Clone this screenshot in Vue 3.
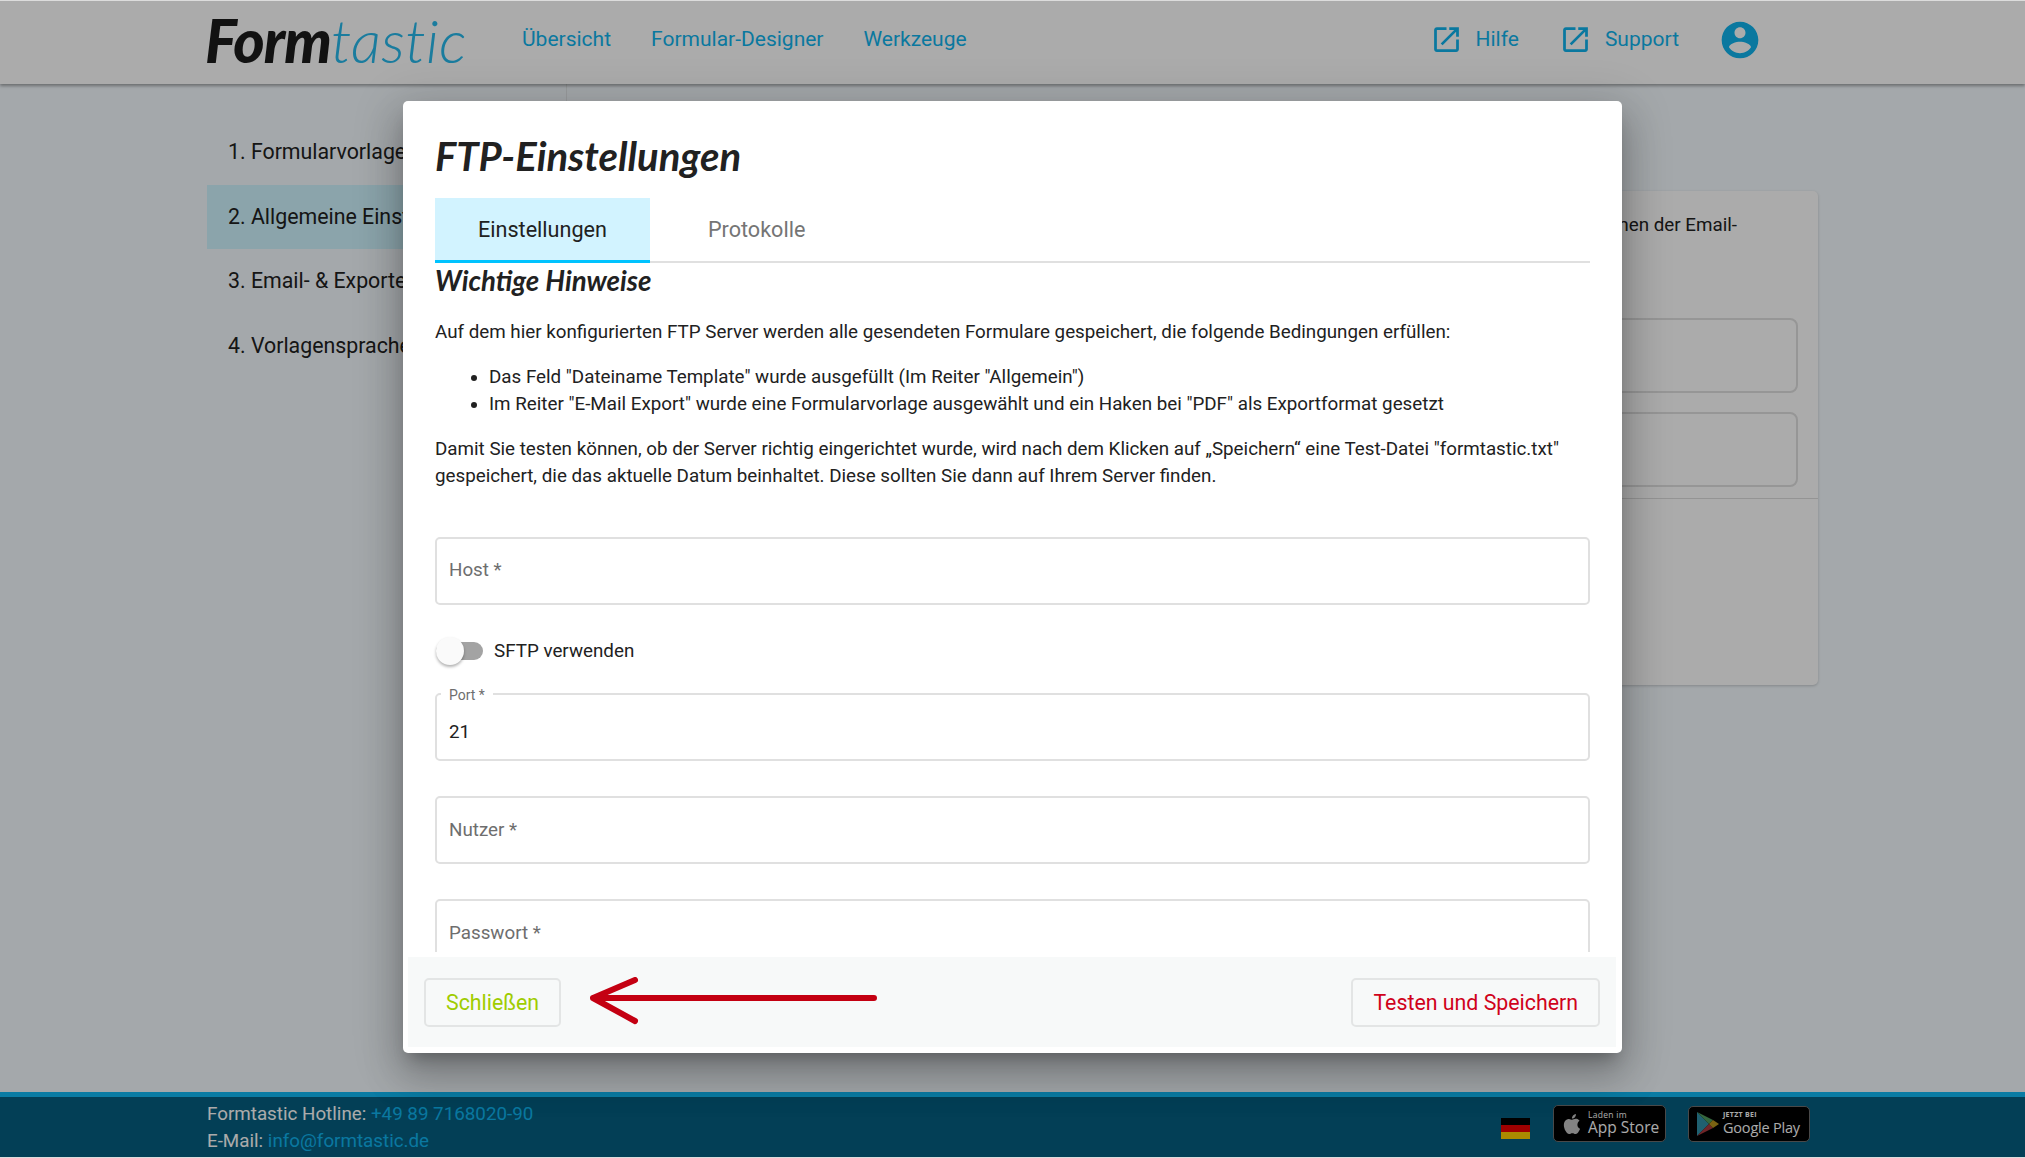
<template>
  <div class="page">
    <header class="topbar">
      <a class="logo"><b>Form</b><span>tastic</span></a>
      <nav class="nav">
        <a v-for="n in navItems" :key="n">{{ n }}</a>
      </nav>
      <div class="top-right">
        <a v-for="l in helpLinks" :key="l" class="ext">
          <svg viewBox="0 0 24 24" width="33" height="33"><path :d="openIcon" /></svg>
          {{ l }}
        </a>
        <svg class="account" viewBox="0 0 24 24" width="44" height="44"><path :d="accountIcon" /></svg>
      </div>
    </header>

    <main class="main">
      <aside class="sidebar">
        <div
          v-for="(s, i) in steps"
          :key="s"
          class="step"
          :class="{ active: i === 1 }"
        >{{ s }}</div>
      </aside>
      <section class="content">
        <div class="card">
          <div class="card-top">
            <p class="card-text">Hier können Sie den Betreff und den Absendernamen der Email-</p>
            <div class="card-box"></div>
            <div class="card-box"></div>
          </div>
          <div class="card-bottom"></div>
        </div>
      </section>
    </main>

    <footer class="footer">
      <div class="contact">
        <div>Formtastic Hotline: <a>+49 89 7168020-90</a></div>
        <div>E-Mail: <a>info@formtastic.de</a></div>
      </div>
      <div class="stores">
        <div class="flag"><i></i><i></i><i></i></div>
        <div class="badge apple">
          <svg viewBox="0 0 24 24" width="24" height="24"><path fill="#c4c4c4" :d="appleIcon" /></svg>
          <div class="badge-text">
            <small>Laden im</small>
            <span>App Store</span>
          </div>
        </div>
        <div class="badge play">
          <svg viewBox="0 0 22 24" width="22" height="24">
            <polygon points="0,0 12,12 0,24" fill="#2f8fa8" />
            <polygon points="0,0 16,8 12,12" fill="#4f9a5c" />
            <polygon points="0,24 16,16 12,12" fill="#a8383c" />
            <polygon points="16,8 22,12 16,16 12,12" fill="#b8921c" />
          </svg>
          <div class="badge-text">
            <small class="caps">JETZT BEI</small>
            <span>Google Play</span>
          </div>
        </div>
      </div>
    </footer>

    <div class="overlay">
      <div class="dialog">
        <h2 class="dialog-title">FTP-Einstellungen</h2>
        <div class="tabs">
          <div class="tab active">Einstellungen</div>
          <div class="tab">Protokolle</div>
        </div>
        <div class="dialog-body">
          <h3 class="hint-title">Wichtige Hinweise</h3>
          <p>Auf dem hier konfigurierten FTP Server werden alle gesendeten Formulare gespeichert, die folgende Bedingungen erfüllen:</p>
          <ul>
            <li>Das Feld "Dateiname Template" wurde ausgefüllt (Im Reiter "Allgemein")</li>
            <li>Im Reiter "E-Mail Export" wurde eine Formularvorlage ausgewählt und ein Haken bei "PDF" als Exportformat gesetzt</li>
          </ul>
          <p>Damit Sie testen können, ob der Server richtig eingerichtet wurde, wird nach dem Klicken auf „Speichern“ eine Test-Datei "formtastic.txt" gespeichert, die das aktuelle Datum beinhaltet. Diese sollten Sie dann auf Ihrem Server finden.</p>

          <div class="field host"><span class="placeholder">Host *</span></div>
          <div class="toggle-row">
            <span class="toggle"><span class="thumb"></span></span>
            <span>SFTP verwenden</span>
          </div>
          <div class="field port">
            <label class="float-label">Port *</label>
            <span class="value">21</span>
          </div>
          <div class="field user"><span class="placeholder">Nutzer *</span></div>
          <div class="field password"><span class="placeholder">Passwort *</span></div>
        </div>
        <div class="actions">
          <button class="btn close">Schließen</button>
          <button class="btn save">Testen und Speichern</button>
          <svg class="arrow" viewBox="0 0 290 48" width="290" height="48" fill="none">
            <path d="M3 21 H284 M45 3 L3 21 L45 44" />
          </svg>
        </div>
      </div>
    </div>
  </div>
</template>

<script setup>
const navItems = ['Übersicht', 'Formular-Designer', 'Werkzeuge']
const helpLinks = ['Hilfe', 'Support']
const steps = [
  '1. Formularvorlage',
  '2. Allgemeine Einstellungen',
  '3. Email- & Exporteinstellungen',
  '4. Vorlagensprache',
]

const openIcon = 'M19 19H5V5h7V3H5c-1.11 0-2 .9-2 2v14c0 1.1.89 2 2 2h14c1.1 0 2-.9 2-2v-7h-2v7zM14 3v2h3.59l-9.83 9.83 1.41 1.41L19 6.41V10h2V3h-7z'
const accountIcon = 'M12 2C6.48 2 2 6.48 2 12s4.48 10 10 10 10-4.48 10-10S17.52 2 12 2zm0 3c1.66 0 3 1.34 3 3s-1.34 3-3 3-3-1.34-3-3 1.34-3 3-3zm0 14.2c-2.5 0-4.71-1.28-6-3.22.03-1.99 4-3.08 6-3.08 1.99 0 5.97 1.09 6 3.08-1.29 1.94-3.5 3.22-6 3.22z'
const appleIcon = 'M18.71 19.5c-.83 1.24-1.71 2.45-3.05 2.47-1.34.03-1.77-.79-3.29-.79-1.53 0-2 .77-3.27.82-1.31.05-2.3-1.32-3.14-2.53C4.25 17 2.94 12.45 4.7 9.39c.87-1.52 2.43-2.48 4.12-2.51 1.28-.02 2.5.87 3.29.87.78 0 2.26-1.07 3.8-.91.65.03 2.47.26 3.64 1.98-.09.06-2.17 1.28-2.15 3.81.03 3.02 2.65 4.03 2.68 4.04-.03.07-.42 1.44-1.38 2.83M13 3.5c.73-.83 1.94-1.46 2.94-1.5.13 1.17-.34 2.35-1.04 3.19-.69.85-1.83 1.51-2.95 1.42-.15-1.15.41-2.35 1.05-3.11z'
</script>

<style>
html, body { background: #dcdcdc; overflow: hidden; }
</style>

<style scoped>
.page {
  position: relative;
  height: 1156px;
  margin-top: 1px;
  display: flex;
  flex-direction: column;
  background: #f5fbff;
  font-family: Roboto, sans-serif;
  font-size: 18.8px;
  line-height: 27px;
  color: #212121;
  overflow: hidden;
}

/* ====== Header ====== */
.topbar {
  height: 83px;
  flex: none;
  display: flex;
  align-items: center;
  padding: 0 263px 6px 205px;
  box-sizing: border-box;
  background: #fff;
  box-shadow: 0 2px 3px rgba(0,0,0,.35);
  z-index: 1;
  font-size: 21px;
}
.logo {
  width: 317px;
  font-family: Lato, sans-serif;
  font-size: 60px;
  font-style: italic;
  line-height: 60px;
  letter-spacing: -1px;
  color: #1c1c1c;
}
.logo b { font-weight: 900; }
.logo span { font-weight: 300; color: #27b9ec; letter-spacing: .3px; }
.nav { display: flex; gap: 40px; }
.nav a, .ext { color: #0fb4ee; }
.top-right { margin-left: auto; display: flex; align-items: center; gap: 40px; }
.ext { display: flex; align-items: center; gap: 13px; }
.ext svg, .account { fill: #0fb4ee; }
.account { margin-left: -1px; }

/* ====== Background page ====== */
.main { flex: 1; display: flex; padding-left: 207px; min-height: 0; }
.sidebar {
  width: 360px;
  height: 700px;
  flex: none;
  padding-top: 36px;
  box-sizing: border-box;
  border-right: 1px solid #e4e8ea;
  font-size: 21.33px;
}
.step { height: 64.5px; line-height: 64.5px; padding-left: 21px; white-space: nowrap; overflow: hidden; }
.step.active { background: #cff5ff; }
.content { flex: 1; padding: 107px 207px 0 33px; }
.card {
  height: 494px;
  background: #fff;
  border-radius: 5px;
  box-shadow: 0 1px 3px rgba(0,0,0,.2);
  overflow: hidden;
}
.card-top { padding: 21px 20px 11px 20px; border-bottom: 1px solid #ddd; }
.card-text { margin: 0 61px 0 0; text-align: right; white-space: nowrap; }
.card-box { height: 75px; margin-top: 19px; border: 2px solid #e0e0e0; border-radius: 8px; box-sizing: border-box; }
.card-box:first-of-type { margin-top: 79px; }

/* ====== Footer ====== */
.footer {
  height: 65px;
  flex: none;
  display: flex;
  justify-content: space-between;
  border-top: 5px solid #10baf5;
  background: #055e80;
  padding: 4px 215px 0 207px;
  box-sizing: border-box;
  color: #fff;
}
.contact a { color: #10b4ef; }
.stores { display: flex; align-items: center; padding-bottom: 11px; }
.flag { width: 29px; margin-right: 23px; margin-top: 10px; }
.flag i { display: block; height: 7px; }
.flag i:nth-child(1) { background: #000; }
.flag i:nth-child(2) { background: #e00; }
.flag i:nth-child(3) { background: #ffce00; }
.badge {
  height: 36px;
  display: flex;
  align-items: center;
  gap: 4px;
  background: #000;
  border: 1px solid #6e6e6e;
  border-radius: 5px;
  color: #fff;
  box-sizing: border-box;
}
.badge.apple { width: 113px; padding-left: 6px; height: 37px; }
.badge.play { width: 122px; margin-left: 22px; padding-left: 8px; }
.badge-text { display: flex; flex-direction: column; font-family: "Open Sans", sans-serif; }
.badge-text small { font-size: 8.5px; line-height: 8px; letter-spacing: .3px; }
.badge-text small.caps { font-size: 7px; font-weight: 700; }
.badge-text span { font-size: 15.5px; line-height: 17px; white-space: nowrap; }
.badge.play .badge-text span { font-size: 14.5px; letter-spacing: -.2px; }

/* ====== Dialog ====== */
.overlay {
  position: absolute;
  inset: 0;
  z-index: 5;
  background: rgba(0,0,0,.33);
  display: flex;
  justify-content: center;
  padding-top: 100px;
}
.dialog {
  width: 1219px;
  height: 952px;
  display: flex;
  flex-direction: column;
  background: #fff;
  border-radius: 5px;
  box-shadow: 0 11px 15px -7px rgba(0,0,0,.25), 0 24px 38px 3px rgba(0,0,0,.17), 0 9px 46px 8px rgba(0,0,0,.15);
}
.dialog-title, .hint-title {
  margin: 0;
  font-family: Lato, sans-serif;
  font-style: italic;
  font-weight: 700;
  color: #212121;
}
.dialog-title { padding: 32px 32px 0; font-size: 40px; line-height: 46px; margin-bottom: 19px; }
.tabs {
  display: flex;
  gap: 15px;
  margin: 0 32px;
  border-bottom: 2px solid #e0e0e0;
  font-size: 21.6px;
}
.tab {
  height: 63px;
  line-height: 63px;
  padding: 0 43px;
  color: #757575;
  box-sizing: border-box;
}
.tab.active {
  color: #212121;
  background: #d2f3ff;
  border-bottom: 3px solid #00c3ff;
  height: 65px;
  margin-bottom: -2px;
}
.dialog-body { flex: 1; padding: 0 32px; min-height: 0; overflow: hidden; }
.hint-title { font-size: 27.6px; line-height: 36px; margin-bottom: 20px; }
.dialog-body p { margin: 18px 0; }
.dialog-body ul { margin: 18px 0; padding-left: 54px; }
.field {
  position: relative;
  height: 68px;
  display: flex;
  align-items: center;
  padding-left: 12px;
  border: 2px solid #e0e0e0;
  border-radius: 5px;
  box-sizing: border-box;
}
.placeholder { color: #6e6e6e; }
.host { margin-top: 46.5px; }
.toggle-row { display: flex; align-items: center; gap: 11px; height: 27px; margin-top: 33px; padding-left: 1px; }
.toggle { position: relative; width: 47px; height: 18px; border-radius: 9px; background: #a3a3a3; }
.thumb {
  position: absolute;
  left: 0;
  top: -5px;
  width: 28px;
  height: 28px;
  border-radius: 50%;
  background: #fafafa;
  box-shadow: 0 2px 3px rgba(0,0,0,.3);
}
.port { margin-top: 28px; padding-top: 12px; }
.float-label {
  position: absolute;
  left: 4px;
  top: -10px;
  padding: 0 8px;
  background: #fff;
  font-size: 14px;
  line-height: 20px;
  color: #6e6e6e;
}
.user { margin-top: 35.7px; }
.password { margin-top: 35px; }
.actions {
  position: relative;
  flex: none;
  height: 90px;
  margin: 5px 6px 6px 5px;
  display: flex;
  align-items: center;
  justify-content: space-between;
  padding: 0 16px 0 16px;
  background: #f7f9f9;
}
.btn {
  height: 49px;
  padding: 0 20px;
  background: transparent;
  border: 2px solid #e3e5e5;
  border-radius: 5px;
  font: 400 21.33px Roboto, sans-serif;
}
.btn.close { color: #9fcc00; }
.btn.save { color: #d0021b; }
/* Rote Markierung aus dem Screenshot */
.arrow { position: absolute; left: 182px; top: 20px; }
.arrow path { stroke: #c40012; stroke-width: 6; stroke-linecap: round; stroke-linejoin: round; }
</style>
